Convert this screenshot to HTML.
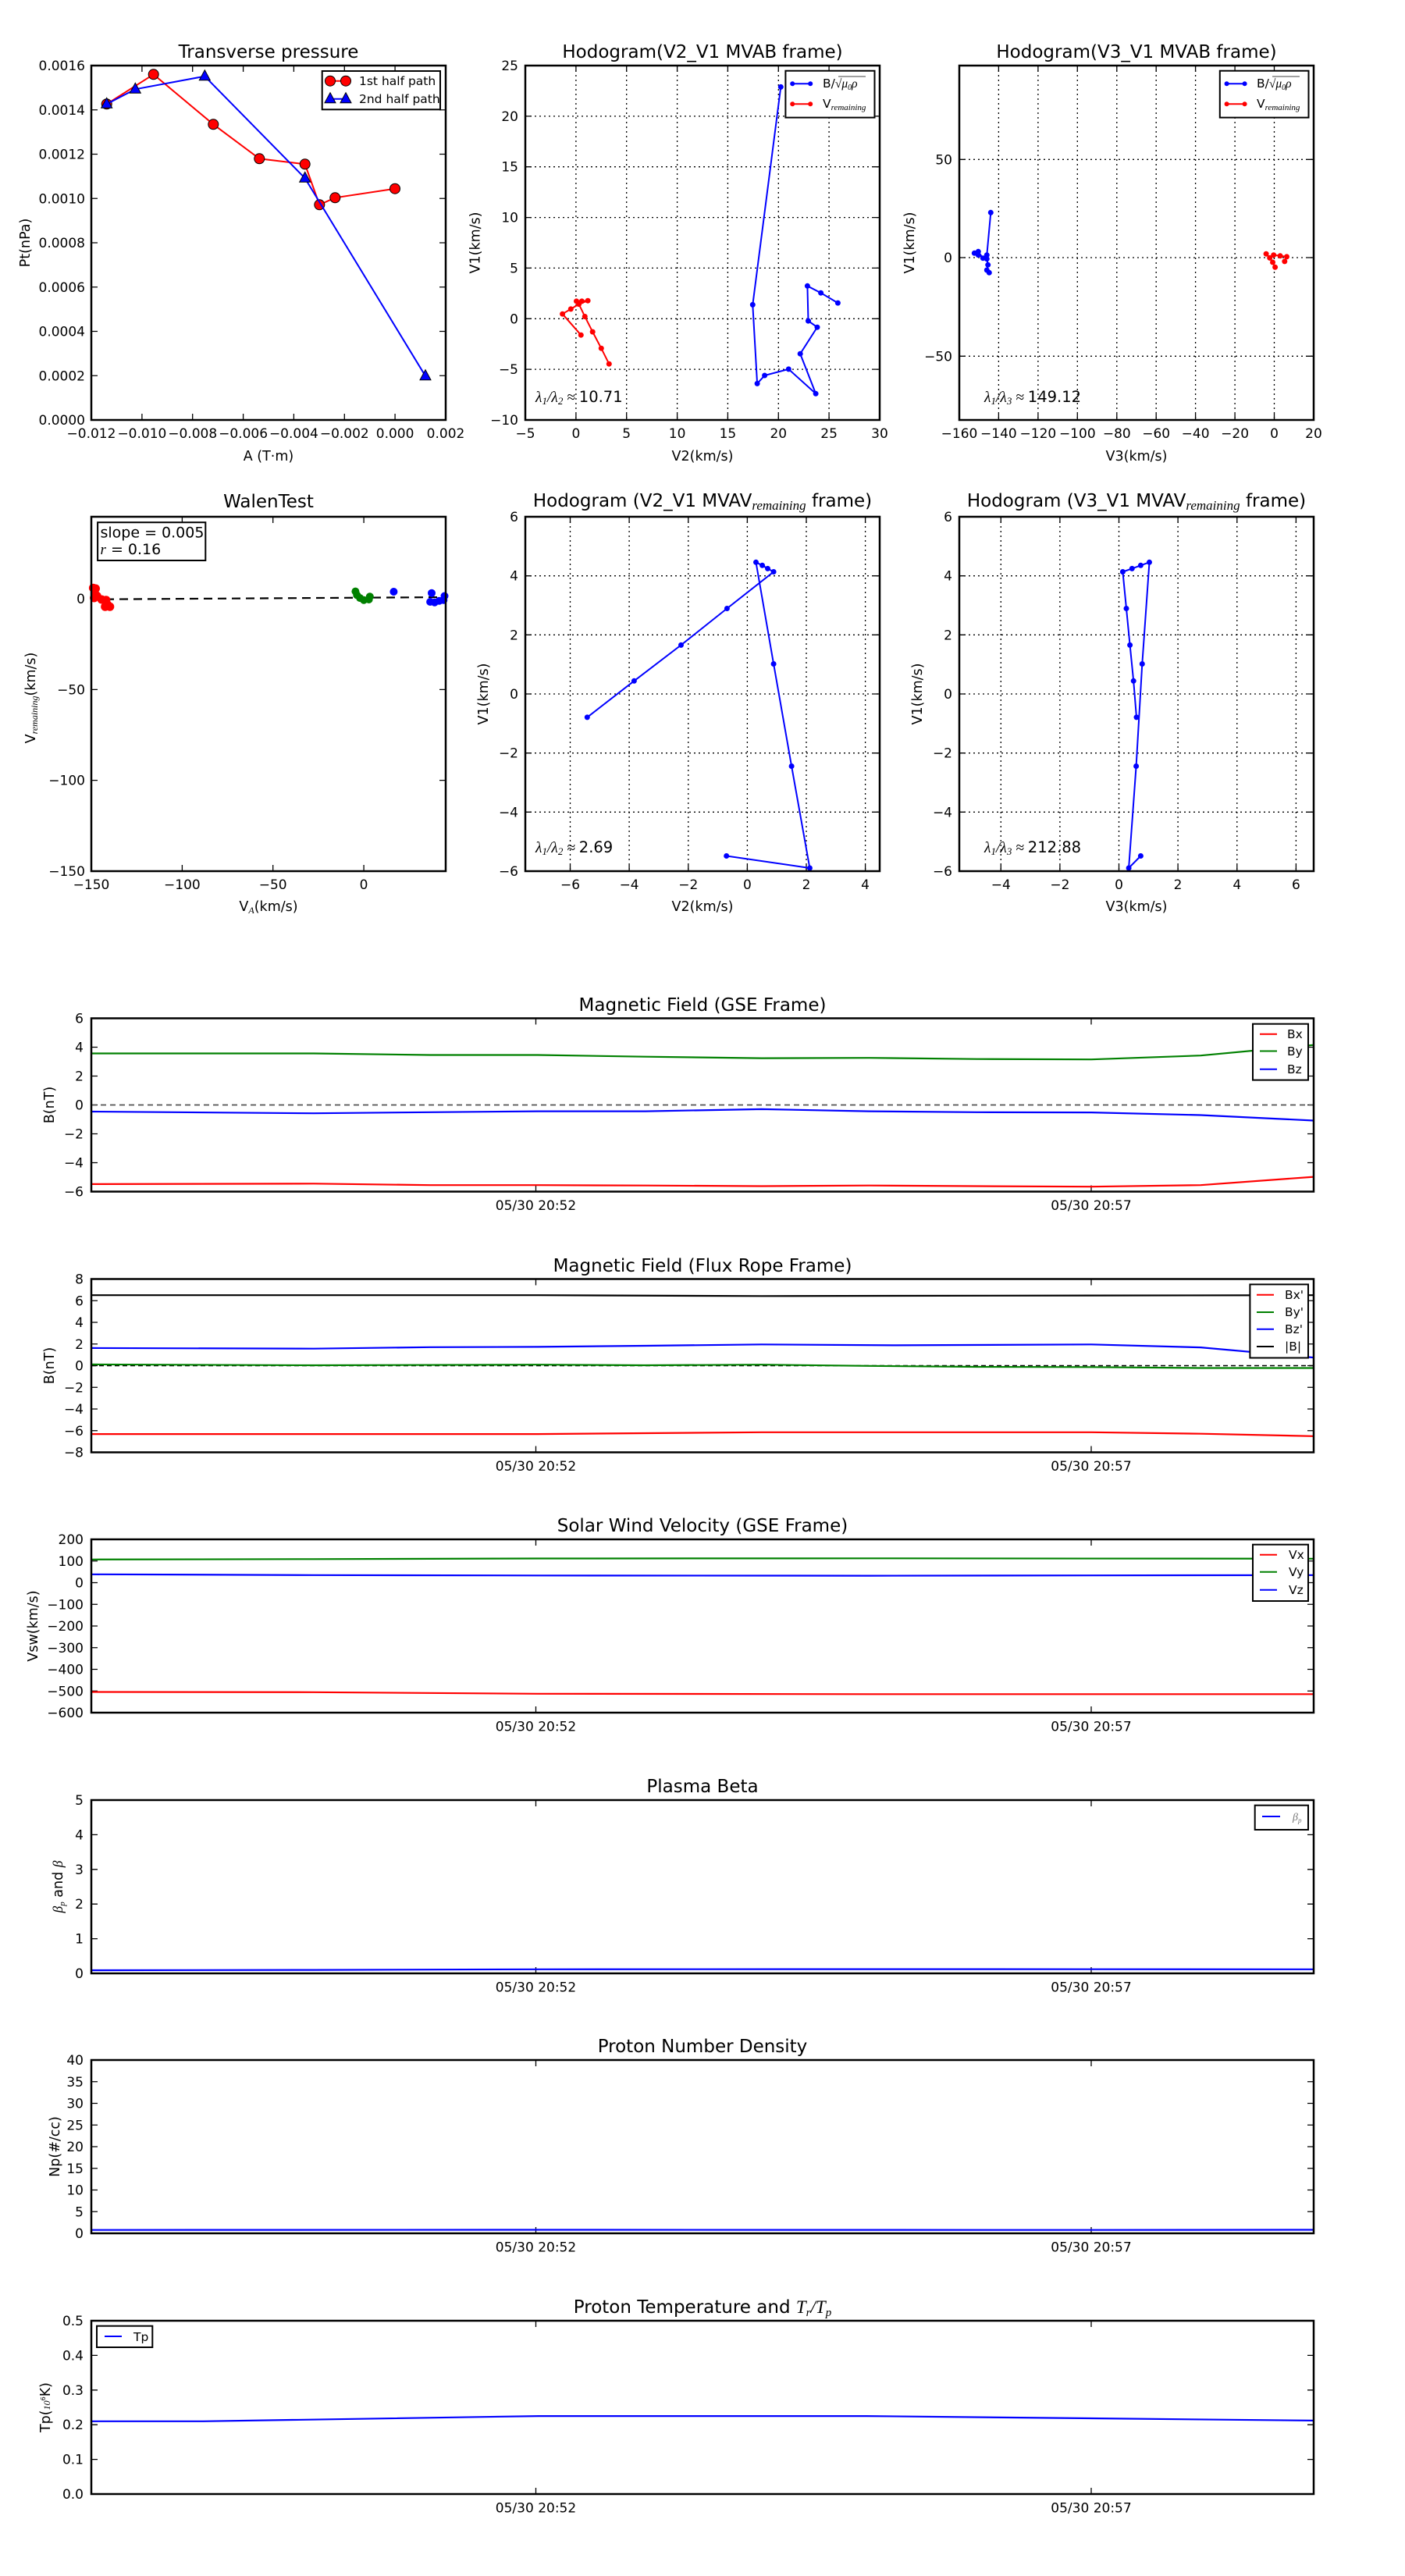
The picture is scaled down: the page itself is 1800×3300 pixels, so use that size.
<!DOCTYPE html>
<html><head><meta charset="utf-8"><style>
html,body{margin:0;padding:0;background:#fff;}
svg{display:block;font-family:"DejaVu Sans","Liberation Sans",sans-serif;}
.t{font-size:17px;fill:#000;}
.ti{font-size:23px;fill:#000;text-anchor:middle;}
.al{font-size:17.5px;fill:#000;text-anchor:middle;}
.lg{font-size:15.5px;fill:#000;}
.lam{font-size:19.5px;fill:#000;}
.m{font-family:"Liberation Serif","DejaVu Serif",serif;font-style:italic;}
.ax{fill:none;stroke:#000;stroke-width:2.5;}
.tk{fill:none;stroke:#000;stroke-width:1.3;}
.gr{fill:none;stroke:#000;stroke-width:1.3;stroke-dasharray:2 4;}
.r{text-anchor:end;}
.c{text-anchor:middle;}
</style></head><body>
<svg width="1800" height="3300" viewBox="0 0 1800 3300" xmlns="http://www.w3.org/2000/svg">
<rect width="1800" height="3300" fill="#fff"/>

<!-- ============ P1 Transverse pressure ============ -->
<text class="ti" x="344" y="74">Transverse pressure</text>
<path class="tk" d="M181.9 538v-8M246.7 538v-8M311.6 538v-8M376.4 538v-8M441.3 538v-8M506.1 538v-8M181.9 84v8M246.7 84v8M311.6 84v8M376.4 84v8M441.3 84v8M506.1 84v8M117 481.25h8M117 424.5h8M117 367.75h8M117 311h8M117 254.25h8M117 197.5h8M117 140.75h8M571 481.25h-8M571 424.5h-8M571 367.75h-8M571 311h-8M571 254.25h-8M571 197.5h-8M571 140.75h-8"/>
<polyline fill="none" stroke="#f00" stroke-width="2" points="136.7,133.3 196.7,95.3 273.3,159.3 332.3,203.3 390.7,210.3 409.3,262.3 429.3,253.3 506,241.7"/>
<g fill="#f00" stroke="#000" stroke-width="1"><circle cx="136.7" cy="133.3" r="6.5"/><circle cx="196.7" cy="95.3" r="6.5"/><circle cx="273.3" cy="159.3" r="6.5"/><circle cx="332.3" cy="203.3" r="6.5"/><circle cx="390.7" cy="210.3" r="6.5"/><circle cx="409.3" cy="262.3" r="6.5"/><circle cx="429.3" cy="253.3" r="6.5"/><circle cx="506" cy="241.7" r="6.5"/></g>
<polyline fill="none" stroke="#00f" stroke-width="2" points="136.7,133.3 173.3,114.3 262.3,97.7 390.7,228.3 545,481.7"/>
<g fill="#00f" stroke="#000" stroke-width="1"><polygon points="136.7,125.3 129.7,138.3 143.7,138.3"/><polygon points="173.3,106.3 166.3,119.3 180.3,119.3"/><polygon points="262.3,89.7 255.3,102.7 269.3,102.7"/><polygon points="390.7,220.3 383.7,233.3 397.7,233.3"/><polygon points="545,473.7 538,486.7 552,486.7"/></g>
<rect x="412.7" y="91" width="151.3" height="49.3" fill="#fff" stroke="#000" stroke-width="2"/>
<line x1="423" y1="103.7" x2="443" y2="103.7" stroke="#f00" stroke-width="2"/>
<circle cx="423" cy="103.7" r="6.5" fill="#f00" stroke="#000"/><circle cx="443" cy="103.7" r="6.5" fill="#f00" stroke="#000"/>
<text class="lg" x="460" y="109">1st half path</text>
<line x1="423" y1="126.7" x2="443" y2="126.7" stroke="#00f" stroke-width="2"/>
<polygon points="423,118.7 416,131.7 430,131.7" fill="#00f" stroke="#000"/><polygon points="443,118.7 436,131.7 450,131.7" fill="#00f" stroke="#000"/>
<text class="lg" x="460" y="132">2nd half path</text>
<rect class="ax" x="117" y="84" width="454" height="454"/>
<g class="t c"><text x="117" y="561">−0.012</text><text x="181.9" y="561">−0.010</text><text x="246.7" y="561">−0.008</text><text x="311.6" y="561">−0.006</text><text x="376.4" y="561">−0.004</text><text x="441.3" y="561">−0.002</text><text x="506.1" y="561">0.000</text><text x="571" y="561">0.002</text></g>
<g class="t r"><text x="109" y="544">0.0000</text><text x="109" y="487.25">0.0002</text><text x="109" y="430.5">0.0004</text><text x="109" y="373.75">0.0006</text><text x="109" y="317">0.0008</text><text x="109" y="260.25">0.0010</text><text x="109" y="203.5">0.0012</text><text x="109" y="146.75">0.0014</text><text x="109" y="90">0.0016</text></g>
<text class="al" x="344" y="590">A (T·m)</text>
<text class="al" transform="translate(38,311) rotate(-90)">Pt(nPa)</text>

<!-- ============ P2 Hodogram V2_V1 MVAB ============ -->
<text class="ti" x="900" y="74">Hodogram(V2_V1 MVAB frame)</text>
<path class="gr" d="M737.9 84V538M802.7 84V538M867.6 84V538M932.4 84V538M997.3 84V538M1062.1 84V538M673 148.9H1127M673 213.7H1127M673 278.6H1127M673 343.4H1127M673 408.3H1127M673 473.1H1127"/>
<path class="tk" d="M737.9 538v-8M802.7 538v-8M867.6 538v-8M932.4 538v-8M997.3 538v-8M1062.1 538v-8M737.9 84v8M802.7 84v8M867.6 84v8M932.4 84v8M997.3 84v8M1062.1 84v8M673 148.9h8M673 213.7h8M673 278.6h8M673 343.4h8M673 408.3h8M673 473.1h8M1127 148.9h-8M1127 213.7h-8M1127 278.6h-8M1127 343.4h-8M1127 408.3h-8M1127 473.1h-8"/>
<polyline fill="none" stroke="#00f" stroke-width="2" points="1000.3,111.4 964.3,390.4 970.1,491.4 979.6,481 1010.3,472.9 1045.1,504.3 1025.2,453.2 1047,419.2 1035.5,411.1 1034.4,366.3 1051.6,375.2 1073.4,388.1"/>
<g fill="#00f"><circle cx="1000.3" cy="111.4" r="3.5"/><circle cx="964.3" cy="390.4" r="3.5"/><circle cx="970.1" cy="491.4" r="3.5"/><circle cx="979.6" cy="481" r="3.5"/><circle cx="1010.3" cy="472.9" r="3.5"/><circle cx="1045.1" cy="504.3" r="3.5"/><circle cx="1025.2" cy="453.2" r="3.5"/><circle cx="1047" cy="419.2" r="3.5"/><circle cx="1035.5" cy="411.1" r="3.5"/><circle cx="1034.4" cy="366.3" r="3.5"/><circle cx="1051.6" cy="375.2" r="3.5"/><circle cx="1073.4" cy="388.1" r="3.5"/></g>
<polyline fill="none" stroke="#f00" stroke-width="2" points="744.3,429.2 720.6,402.2 731.3,395.9 741.6,389.6 738.5,385.9 745.4,385.9 753.1,385.2 741.6,389.6 749.3,405.5 759.2,425.1 770.3,446.2 780.3,466.2"/>
<g fill="#f00"><circle cx="744.3" cy="429.2" r="3.5"/><circle cx="720.6" cy="402.2" r="3.5"/><circle cx="731.3" cy="395.9" r="3.5"/><circle cx="741.6" cy="389.6" r="3.5"/><circle cx="738.5" cy="385.9" r="3.5"/><circle cx="745.4" cy="385.9" r="3.5"/><circle cx="753.1" cy="385.2" r="3.5"/><circle cx="749.3" cy="405.5" r="3.5"/><circle cx="759.2" cy="425.1" r="3.5"/><circle cx="770.3" cy="446.2" r="3.5"/><circle cx="780.3" cy="466.2" r="3.5"/></g>
<rect x="1006.4" y="90.7" width="114.1" height="59.9" fill="#fff" stroke="#000" stroke-width="2"/>
<line x1="1015.2" y1="107.3" x2="1038.2" y2="107.3" stroke="#00f" stroke-width="2"/><circle cx="1015.2" cy="107.3" r="3" fill="#00f"/><circle cx="1038.2" cy="107.3" r="3" fill="#00f"/>
<text class="lg" x="1054" y="112">B/<tspan class="m">√μ<tspan font-size="10" dy="3">0</tspan><tspan dy="-3">ρ</tspan></tspan></text>
<line x1="1074" y1="98" x2="1109" y2="98" stroke="#000" stroke-width="0.8"/>
<line x1="1015.2" y1="133.2" x2="1038.2" y2="133.2" stroke="#f00" stroke-width="2"/><circle cx="1015.2" cy="133.2" r="3" fill="#f00"/><circle cx="1038.2" cy="133.2" r="3" fill="#f00"/>
<text class="lg" x="1054" y="138">V<tspan class="m" font-size="11" dy="3">remaining</tspan></text>
<text class="lam" x="686" y="515"><tspan class="m">λ<tspan font-size="13" dy="3">1</tspan><tspan dy="-3">/λ</tspan><tspan font-size="13" dy="3">2</tspan><tspan dy="-3"> ≈ </tspan></tspan>10.71</text>
<rect class="ax" x="673" y="84" width="454" height="454"/>
<g class="t c"><text x="673" y="561">−5</text><text x="737.9" y="561">0</text><text x="802.7" y="561">5</text><text x="867.6" y="561">10</text><text x="932.4" y="561">15</text><text x="997.3" y="561">20</text><text x="1062.1" y="561">25</text><text x="1127" y="561">30</text></g>
<g class="t r"><text x="664" y="90">25</text><text x="664" y="154.9">20</text><text x="664" y="219.7">15</text><text x="664" y="284.6">10</text><text x="664" y="349.4">5</text><text x="664" y="414.3">0</text><text x="664" y="479.1">−5</text><text x="664" y="544">−10</text></g>
<text class="al" x="900" y="590">V2(km/s)</text>
<text class="al" transform="translate(614.5,311) rotate(-90)">V1(km/s)</text>

<!-- ============ P3 Hodogram V3_V1 MVAB ============ -->
<text class="ti" x="1456" y="74">Hodogram(V3_V1 MVAB frame)</text>
<path class="gr" d="M1279.4 84V538M1329.9 84V538M1380.3 84V538M1430.8 84V538M1481.2 84V538M1531.6 84V538M1582.1 84V538M1632.5 84V538M1229 204.3H1683M1229 330H1683M1229 456.3H1683"/>
<path class="tk" d="M1279.4 538v-8M1329.9 538v-8M1380.3 538v-8M1430.8 538v-8M1481.2 538v-8M1531.6 538v-8M1582.1 538v-8M1632.5 538v-8M1279.4 84v8M1329.9 84v8M1380.3 84v8M1430.8 84v8M1481.2 84v8M1531.6 84v8M1582.1 84v8M1632.5 84v8M1229 204.3h8M1229 330h8M1229 456.3h8M1683 204.3h-8M1683 330h-8M1683 456.3h-8"/>
<polyline fill="none" stroke="#00f" stroke-width="2" points="1269.3,272.3 1264.3,326.7 1264.3,331.7 1259.3,330.7 1253.3,322.3 1248.3,324.3 1253.3,326.7 1264.3,331.7 1265.7,339.3 1264.3,346 1267.3,349.3"/>
<g fill="#00f"><circle cx="1269.3" cy="272.3" r="3.5"/><circle cx="1264.3" cy="326.7" r="3.5"/><circle cx="1264.3" cy="331.7" r="3.5"/><circle cx="1259.3" cy="330.7" r="3.5"/><circle cx="1253.3" cy="322.3" r="3.5"/><circle cx="1248.3" cy="324.3" r="3.5"/><circle cx="1253.3" cy="326.7" r="3.5"/><circle cx="1265.7" cy="339.3" r="3.5"/><circle cx="1264.3" cy="346" r="3.5"/><circle cx="1267.3" cy="349.3" r="3.5"/></g>
<polyline fill="none" stroke="#f00" stroke-width="2" points="1622.1,325.2 1626.7,330.4 1630.5,336 1633.6,342.3"/>
<polyline fill="none" stroke="#f00" stroke-width="2" points="1626.7,330.4 1631.7,326.7 1640.1,327.8 1648.5,328.9 1645.8,334.9"/>
<g fill="#f00"><circle cx="1622.1" cy="325.2" r="3.5"/><circle cx="1626.7" cy="330.4" r="3.5"/><circle cx="1630.5" cy="336" r="3.5"/><circle cx="1633.6" cy="342.3" r="3.5"/><circle cx="1631.7" cy="326.7" r="3.5"/><circle cx="1640.1" cy="327.8" r="3.5"/><circle cx="1645.8" cy="334.9" r="3.5"/><circle cx="1648.5" cy="328.9" r="3.5"/></g>
<rect x="1562.8" y="90.7" width="113.7" height="59.9" fill="#fff" stroke="#000" stroke-width="2"/>
<line x1="1571.6" y1="107.3" x2="1594.6" y2="107.3" stroke="#00f" stroke-width="2"/><circle cx="1571.6" cy="107.3" r="3" fill="#00f"/><circle cx="1594.6" cy="107.3" r="3" fill="#00f"/>
<text class="lg" x="1610" y="112">B/<tspan class="m">√μ<tspan font-size="10" dy="3">0</tspan><tspan dy="-3">ρ</tspan></tspan></text>
<line x1="1630" y1="98" x2="1665" y2="98" stroke="#000" stroke-width="0.8"/>
<line x1="1571.6" y1="133.2" x2="1594.6" y2="133.2" stroke="#f00" stroke-width="2"/><circle cx="1571.6" cy="133.2" r="3" fill="#f00"/><circle cx="1594.6" cy="133.2" r="3" fill="#f00"/>
<text class="lg" x="1610" y="138">V<tspan class="m" font-size="11" dy="3">remaining</tspan></text>
<text class="lam" x="1261" y="515"><tspan class="m">λ<tspan font-size="13" dy="3">1</tspan><tspan dy="-3">/λ</tspan><tspan font-size="13" dy="3">3</tspan><tspan dy="-3"> ≈ </tspan></tspan>149.12</text>
<rect class="ax" x="1229" y="84" width="454" height="454"/>
<g class="t c"><text x="1229" y="561">−160</text><text x="1279.4" y="561">−140</text><text x="1329.9" y="561">−120</text><text x="1380.3" y="561">−100</text><text x="1430.8" y="561">−80</text><text x="1481.2" y="561">−60</text><text x="1531.6" y="561">−40</text><text x="1582.1" y="561">−20</text><text x="1632.5" y="561">0</text><text x="1683" y="561">20</text></g>
<g class="t r"><text x="1220" y="210.3">50</text><text x="1220" y="336">0</text><text x="1220" y="462.3">−50</text></g>
<text class="al" x="1456" y="590">V3(km/s)</text>
<text class="al" transform="translate(1171,311) rotate(-90)">V1(km/s)</text>

<!-- ============ P4 WalenTest ============ -->
<text class="ti" x="344" y="650">WalenTest</text>
<path class="tk" d="M233.4 1116v-8M349.7 1116v-8M466.1 1116v-8M233.4 662v8M349.7 662v8M466.1 662v8M117 767.2h8M117 883.4h8M117 999.6h8M571 767.2h-8M571 883.4h-8M571 999.6h-8"/>
<line x1="117" y1="767.8" x2="571" y2="765" stroke="#000" stroke-width="2.2" stroke-dasharray="11 7"/>
<g fill="#f00"><circle cx="119.4" cy="753.2" r="5.5"/><circle cx="122.5" cy="754" r="5.5"/><circle cx="121.7" cy="760.6" r="5.5"/><circle cx="124.4" cy="763.5" r="5.5"/><circle cx="120.6" cy="766" r="5.5"/><circle cx="130.1" cy="768" r="5.5"/><circle cx="135.9" cy="768.7" r="5.5"/><circle cx="137.8" cy="774.6" r="5.5"/><circle cx="140.8" cy="777.2" r="5.5"/><circle cx="134.7" cy="777.2" r="5.5"/></g>
<g fill="#008000"><circle cx="455.4" cy="757.6" r="5"/><circle cx="457.3" cy="762.4" r="5"/><circle cx="461.2" cy="766.1" r="5"/><circle cx="466.1" cy="768.7" r="5"/><circle cx="473.8" cy="764.3" r="5"/><circle cx="472.6" cy="768" r="5"/></g>
<g fill="#00f"><circle cx="504.4" cy="758" r="5"/><circle cx="553" cy="759.8" r="5"/><circle cx="551.1" cy="771" r="5"/><circle cx="556.8" cy="771.7" r="5"/><circle cx="562.6" cy="769.8" r="5"/><circle cx="569.5" cy="763.5" r="5"/><circle cx="568.3" cy="768.7" r="5"/></g>
<rect x="125.1" y="669.2" width="138.2" height="48.8" fill="#fff" stroke="#000" stroke-width="2"/>
<text x="128.5" y="688.5" font-size="19">slope = 0.005</text>
<text x="128.5" y="710" font-size="19"><tspan class="m">r</tspan> = 0.16</text>
<rect class="ax" x="117" y="662" width="454" height="454"/>
<g class="t c"><text x="117" y="1139">−150</text><text x="233.4" y="1139">−100</text><text x="349.7" y="1139">−50</text><text x="466.1" y="1139">0</text></g>
<g class="t r"><text x="109" y="773.2">0</text><text x="109" y="889.4">−50</text><text x="109" y="1005.6">−100</text><text x="109" y="1122">−150</text></g>
<text class="al" x="344" y="1167">V<tspan class="m" font-size="12" dy="3">A</tspan><tspan dy="-3">(km/s)</tspan></text>
<text class="al" transform="translate(45,894) rotate(-90)">V<tspan class="m" font-size="12" dy="3">remaining</tspan><tspan dy="-3">(km/s)</tspan></text>

<!-- ============ P5 Hodogram V2_V1 MVAV ============ -->
<text class="ti" x="900" y="649">Hodogram (V2_V1 MVAV<tspan class="m" font-size="17" dy="4">remaining</tspan><tspan dy="-4"> frame)</tspan></text>
<path class="gr" d="M730.5 662V1116M806.1 662V1116M881.8 662V1116M957.4 662V1116M1033 662V1116M1108.6 662V1116M673 737.7H1127M673 813.3H1127M673 889H1127M673 964.7H1127M673 1040.3H1127"/>
<path class="tk" d="M730.5 1116v-8M806.1 1116v-8M881.8 1116v-8M957.4 1116v-8M1033 1116v-8M1108.6 1116v-8M730.5 662v8M806.1 662v8M881.8 662v8M957.4 662v8M1033 662v8M1108.6 662v8M673 737.7h8M673 813.3h8M673 889h8M673 964.7h8M673 1040.3h8M1127 737.7h-8M1127 813.3h-8M1127 889h-8M1127 964.7h-8M1127 1040.3h-8"/>
<polyline fill="none" stroke="#00f" stroke-width="2" points="930.7,1096.5 1037.4,1112 1014.1,981.5 991.1,850.5 968.5,720.3 976.6,724.3 983.5,728.4 991.1,732.5 931.4,779.5 872.5,826.4 812.4,872.3 752.3,918.9"/>
<g fill="#00f"><circle cx="930.7" cy="1096.5" r="3.5"/><circle cx="1037.4" cy="1112" r="3.5"/><circle cx="1014.1" cy="981.5" r="3.5"/><circle cx="991.1" cy="850.5" r="3.5"/><circle cx="968.5" cy="720.3" r="3.5"/><circle cx="976.6" cy="724.3" r="3.5"/><circle cx="983.5" cy="728.4" r="3.5"/><circle cx="991.1" cy="732.5" r="3.5"/><circle cx="931.4" cy="779.5" r="3.5"/><circle cx="872.5" cy="826.4" r="3.5"/><circle cx="812.4" cy="872.3" r="3.5"/><circle cx="752.3" cy="918.9" r="3.5"/></g>
<text class="lam" x="686" y="1092"><tspan class="m">λ<tspan font-size="13" dy="3">1</tspan><tspan dy="-3">/λ</tspan><tspan font-size="13" dy="3">2</tspan><tspan dy="-3"> ≈ </tspan></tspan>2.69</text>
<rect class="ax" x="673" y="662" width="454" height="454"/>
<g class="t c"><text x="730.5" y="1139">−6</text><text x="806.1" y="1139">−4</text><text x="881.8" y="1139">−2</text><text x="957.4" y="1139">0</text><text x="1033" y="1139">2</text><text x="1108.6" y="1139">4</text></g>
<g class="t r"><text x="664" y="668">6</text><text x="664" y="743.7">4</text><text x="664" y="819.3">2</text><text x="664" y="895">0</text><text x="664" y="970.7">−2</text><text x="664" y="1046.3">−4</text><text x="664" y="1122">−6</text></g>
<text class="al" x="900" y="1167">V2(km/s)</text>
<text class="al" transform="translate(625,889) rotate(-90)">V1(km/s)</text>

<!-- ============ P6 Hodogram V3_V1 MVAV ============ -->
<text class="ti" x="1456" y="649">Hodogram (V3_V1 MVAV<tspan class="m" font-size="17" dy="4">remaining</tspan><tspan dy="-4"> frame)</tspan></text>
<path class="gr" d="M1282.3 662V1116M1357.9 662V1116M1433.5 662V1116M1509.1 662V1116M1584.8 662V1116M1660.4 662V1116M1229 737.7H1683M1229 813.3H1683M1229 889H1683M1229 964.7H1683M1229 1040.3H1683"/>
<path class="tk" d="M1282.3 1116v-8M1357.9 1116v-8M1433.5 1116v-8M1509.1 1116v-8M1584.8 1116v-8M1660.4 1116v-8M1282.3 662v8M1357.9 662v8M1433.5 662v8M1509.1 662v8M1584.8 662v8M1660.4 662v8M1229 737.7h8M1229 813.3h8M1229 889h8M1229 964.7h8M1229 1040.3h8M1683 737.7h-8M1683 813.3h-8M1683 889h-8M1683 964.7h-8M1683 1040.3h-8"/>
<polyline fill="none" stroke="#00f" stroke-width="2" points="1461.4,1096.5 1446.1,1112 1455.6,981.5 1463.3,850.5 1472.5,720.3 1461.4,724.3 1450.3,728.4 1438.4,732.5 1443,779.5 1447.6,826.4 1452.2,872.3 1456,918.9"/>
<g fill="#00f"><circle cx="1461.4" cy="1096.5" r="3.5"/><circle cx="1446.1" cy="1112" r="3.5"/><circle cx="1455.6" cy="981.5" r="3.5"/><circle cx="1463.3" cy="850.5" r="3.5"/><circle cx="1472.5" cy="720.3" r="3.5"/><circle cx="1461.4" cy="724.3" r="3.5"/><circle cx="1450.3" cy="728.4" r="3.5"/><circle cx="1438.4" cy="732.5" r="3.5"/><circle cx="1443" cy="779.5" r="3.5"/><circle cx="1447.6" cy="826.4" r="3.5"/><circle cx="1452.2" cy="872.3" r="3.5"/><circle cx="1456" cy="918.9" r="3.5"/></g>
<text class="lam" x="1261" y="1092"><tspan class="m">λ<tspan font-size="13" dy="3">1</tspan><tspan dy="-3">/λ</tspan><tspan font-size="13" dy="3">3</tspan><tspan dy="-3"> ≈ </tspan></tspan>212.88</text>
<rect class="ax" x="1229" y="662" width="454" height="454"/>
<g class="t c"><text x="1282.3" y="1139">−4</text><text x="1357.9" y="1139">−2</text><text x="1433.5" y="1139">0</text><text x="1509.1" y="1139">2</text><text x="1584.8" y="1139">4</text><text x="1660.4" y="1139">6</text></g>
<g class="t r"><text x="1220" y="668">6</text><text x="1220" y="743.7">4</text><text x="1220" y="819.3">2</text><text x="1220" y="895">0</text><text x="1220" y="970.7">−2</text><text x="1220" y="1046.3">−4</text><text x="1220" y="1122">−6</text></g>
<text class="al" x="1456" y="1167">V3(km/s)</text>
<text class="al" transform="translate(1181,889) rotate(-90)">V1(km/s)</text>

<!-- ============ TS1 Magnetic Field GSE ============ -->
<text class="ti" x="900" y="1295">Magnetic Field (GSE Frame)</text>
<path class="tk" d="M686.5 1304.5v8M1398 1304.5v8M686.5 1526.5v-8M1398 1526.5v-8M117 1341.5h8M117 1378.5h8M117 1415.5h8M117 1452.5h8M117 1489.5h8M1683 1341.5h-8M1683 1378.5h-8M1683 1415.5h-8M1683 1452.5h-8M1683 1489.5h-8"/>
<line x1="117" y1="1415.5" x2="1683" y2="1415.5" stroke="#555" stroke-width="1.8" stroke-dasharray="7 5"/>
<polyline fill="none" stroke="#008000" stroke-width="2.2" points="117,1349.5 401.8,1349.5 551,1351.5 688.8,1351.5 826.5,1353.7 975.8,1355.6 1113.5,1355.2 1251.3,1356.7 1398.2,1357.2 1538.3,1352.2 1683,1338.7"/>
<polyline fill="none" stroke="#00f" stroke-width="2.2" points="117,1424 401.8,1426.2 551,1424.8 688.8,1423.6 826.5,1423.6 975.8,1420.9 1113.5,1423.6 1251.3,1424.8 1398.2,1425.1 1538.3,1428.5 1683,1435.5"/>
<polyline fill="none" stroke="#f00" stroke-width="2.2" points="117,1516.9 401.8,1516.3 551,1518.2 688.8,1518.2 826.5,1518.7 975.8,1519.5 1113.5,1518.7 1251.3,1519.5 1398.2,1520.2 1538.3,1518.2 1683,1507.6"/>
<rect x="1605" y="1311.7" width="71" height="71.9" fill="#fff" stroke="#000" stroke-width="2"/>
<line x1="1614" y1="1324.7" x2="1636" y2="1324.7" stroke="#f00" stroke-width="2"/><text class="lg" x="1649" y="1330">Bx</text>
<line x1="1614" y1="1346.5" x2="1636" y2="1346.5" stroke="#008000" stroke-width="2"/><text class="lg" x="1649" y="1352">By</text>
<line x1="1614" y1="1369.8" x2="1636" y2="1369.8" stroke="#00f" stroke-width="2"/><text class="lg" x="1649" y="1375">Bz</text>
<rect class="ax" x="117" y="1304.5" width="1566" height="222"/>
<g class="t r"><text x="107" y="1310.5">6</text><text x="107" y="1347.5">4</text><text x="107" y="1384.5">2</text><text x="107" y="1421.5">0</text><text x="107" y="1458.5">−2</text><text x="107" y="1495.5">−4</text><text x="107" y="1532.5">−6</text></g>
<g class="t c"><text x="686.5" y="1550">05/30 20:52</text><text x="1398" y="1550">05/30 20:57</text></g>
<text class="al" transform="translate(69,1415.5) rotate(-90)">B(nT)</text>

<!-- ============ TS2 Magnetic Field Flux Rope ============ -->
<text class="ti" x="900" y="1629">Magnetic Field (Flux Rope Frame)</text>
<path class="tk" d="M686.5 1638.5v8M1398 1638.5v8M686.5 1860.5v-8M1398 1860.5v-8M117 1666.25h8M117 1694h8M117 1721.75h8M117 1749.5h8M117 1777.25h8M117 1805h8M117 1832.75h8M1683 1666.25h-8M1683 1694h-8M1683 1721.75h-8M1683 1749.5h-8M1683 1777.25h-8M1683 1805h-8M1683 1832.75h-8"/>
<line x1="117" y1="1749.5" x2="1683" y2="1749.5" stroke="#000" stroke-width="1.5" stroke-dasharray="6 4"/>
<polyline fill="none" stroke="#000" stroke-width="2.2" points="117,1659.2 688.8,1659.2 975.8,1660.3 1398.2,1659.6 1683,1659.2"/>
<polyline fill="none" stroke="#00f" stroke-width="2.2" points="117,1726.9 401.8,1727.7 551,1725.8 688.8,1725.4 826.5,1724 975.8,1722.3 1148,1723.4 1398.2,1722.3 1538.3,1726.1 1683,1739.1"/>
<polyline fill="none" stroke="#008000" stroke-width="2.2" points="117,1747.9 401.8,1749 688.8,1748.2 826.5,1749 975.8,1748.2 1113.5,1749.8 1251.3,1751 1398.2,1751.3 1538.3,1752.5 1683,1752.5"/>
<polyline fill="none" stroke="#f00" stroke-width="2.2" points="117,1837.1 401.8,1837.1 688.8,1837.1 975.8,1834.8 1398.2,1834.8 1538.3,1836.7 1683,1839.8"/>
<rect x="1601.4" y="1645.4" width="74.6" height="94.1" fill="#fff" stroke="#000" stroke-width="2"/>
<line x1="1610" y1="1658.8" x2="1632" y2="1658.8" stroke="#f00" stroke-width="2"/><text class="lg" x="1646" y="1664">Bx'</text>
<line x1="1610" y1="1681" x2="1632" y2="1681" stroke="#008000" stroke-width="2"/><text class="lg" x="1646" y="1686">By'</text>
<line x1="1610" y1="1702.8" x2="1632" y2="1702.8" stroke="#00f" stroke-width="2"/><text class="lg" x="1646" y="1708">Bz'</text>
<line x1="1610" y1="1725" x2="1632" y2="1725" stroke="#000" stroke-width="2"/><text class="lg" x="1646" y="1730">|B|</text>
<rect class="ax" x="117" y="1638.5" width="1566" height="222"/>
<g class="t r"><text x="107" y="1644.5">8</text><text x="107" y="1672.25">6</text><text x="107" y="1700">4</text><text x="107" y="1727.75">2</text><text x="107" y="1755.5">0</text><text x="107" y="1783.25">−2</text><text x="107" y="1811">−4</text><text x="107" y="1838.75">−6</text><text x="107" y="1866.5">−8</text></g>
<g class="t c"><text x="686.5" y="1884">05/30 20:52</text><text x="1398" y="1884">05/30 20:57</text></g>
<text class="al" transform="translate(69,1749.5) rotate(-90)">B(nT)</text>

<!-- ============ TS3 Solar Wind Velocity ============ -->
<text class="ti" x="900" y="1962">Solar Wind Velocity (GSE Frame)</text>
<path class="tk" d="M686.5 1972v8M1398 1972v8M686.5 2194v-8M1398 2194v-8M117 1999.75h8M117 2027.5h8M117 2055.25h8M117 2083h8M117 2110.75h8M117 2138.5h8M117 2166.25h8M1683 1999.75h-8M1683 2027.5h-8M1683 2055.25h-8M1683 2083h-8M1683 2110.75h-8M1683 2138.5h-8M1683 2166.25h-8"/>
<polyline fill="none" stroke="#008000" stroke-width="2.2" points="117,1997.8 401.8,1997.3 688.8,1996.5 1113.5,1996.3 1683,1996.8"/>
<polyline fill="none" stroke="#00f" stroke-width="2.2" points="117,2016.8 401.8,2017.8 688.8,2018.3 1113.5,2018.6 1683,2017.8"/>
<polyline fill="none" stroke="#f00" stroke-width="2.2" points="117,2167.5 401.8,2167.8 688.8,2169.8 1113.5,2170.3 1683,2170.3"/>
<rect x="1605" y="1978.7" width="71" height="72.3" fill="#fff" stroke="#000" stroke-width="2"/>
<line x1="1614" y1="1991.7" x2="1636" y2="1991.7" stroke="#f00" stroke-width="2"/><text class="lg" x="1651" y="1997">Vx</text>
<line x1="1614" y1="2013.7" x2="1636" y2="2013.7" stroke="#008000" stroke-width="2"/><text class="lg" x="1651" y="2019">Vy</text>
<line x1="1614" y1="2036.7" x2="1636" y2="2036.7" stroke="#00f" stroke-width="2"/><text class="lg" x="1651" y="2042">Vz</text>
<rect class="ax" x="117" y="1972" width="1566" height="222"/>
<g class="t r"><text x="107" y="1978">200</text><text x="107" y="2005.75">100</text><text x="107" y="2033.5">0</text><text x="107" y="2061.25">−100</text><text x="107" y="2089">−200</text><text x="107" y="2116.75">−300</text><text x="107" y="2144.5">−400</text><text x="107" y="2172.25">−500</text><text x="107" y="2200">−600</text></g>
<g class="t c"><text x="686.5" y="2217.5">05/30 20:52</text><text x="1398" y="2217.5">05/30 20:57</text></g>
<text class="al" transform="translate(48,2083) rotate(-90)">Vsw(km/s)</text>

<!-- ============ TS4 Plasma Beta ============ -->
<text class="ti" x="900" y="2296">Plasma Beta</text>
<path class="tk" d="M686.5 2306v8M1398 2306v8M686.5 2528v-8M1398 2528v-8M117 2350.4h8M117 2394.8h8M117 2439.2h8M117 2483.6h8M1683 2350.4h-8M1683 2394.8h-8M1683 2439.2h-8M1683 2483.6h-8"/>
<polyline fill="none" stroke="#00f" stroke-width="2.2" points="117,2524 401.8,2523.6 688.8,2522.8 1113.5,2522.6 1683,2522.8"/>
<rect x="1607.7" y="2312.7" width="68.3" height="31.3" fill="#fff" stroke="#000" stroke-width="2"/>
<line x1="1617" y1="2327" x2="1640" y2="2327" stroke="#00f" stroke-width="2"/>
<text x="1656" y="2332" font-size="14" fill="#777" class="m">β<tspan font-size="9" dy="3">p</tspan></text>
<rect class="ax" x="117" y="2306" width="1566" height="222"/>
<g class="t r"><text x="107" y="2312">5</text><text x="107" y="2356.4">4</text><text x="107" y="2400.8">3</text><text x="107" y="2445.2">2</text><text x="107" y="2489.6">1</text><text x="107" y="2534">0</text></g>
<g class="t c"><text x="686.5" y="2551.5">05/30 20:52</text><text x="1398" y="2551.5">05/30 20:57</text></g>
<text class="al" transform="translate(80,2417) rotate(-90)"><tspan class="m">β<tspan font-size="11" dy="3">p</tspan></tspan><tspan dy="-3"> and </tspan><tspan class="m">β</tspan></text>

<!-- ============ TS5 Proton Number Density ============ -->
<text class="ti" x="900" y="2629">Proton Number Density</text>
<path class="tk" d="M686.5 2639v8M1398 2639v8M686.5 2861v-8M1398 2861v-8M117 2666.75h8M117 2694.5h8M117 2722.25h8M117 2750h8M117 2777.75h8M117 2805.5h8M117 2833.25h8M1683 2666.75h-8M1683 2694.5h-8M1683 2722.25h-8M1683 2750h-8M1683 2777.75h-8M1683 2805.5h-8M1683 2833.25h-8"/>
<polyline fill="none" stroke="#00f" stroke-width="2.2" points="117,2856.7 688.8,2856.5 1398.2,2856.7 1683,2856.5"/>
<rect class="ax" x="117" y="2639" width="1566" height="222"/>
<g class="t r"><text x="107" y="2645">40</text><text x="107" y="2672.75">35</text><text x="107" y="2700.5">30</text><text x="107" y="2728.25">25</text><text x="107" y="2756">20</text><text x="107" y="2783.75">15</text><text x="107" y="2811.5">10</text><text x="107" y="2839.25">5</text><text x="107" y="2867">0</text></g>
<g class="t c"><text x="686.5" y="2884.5">05/30 20:52</text><text x="1398" y="2884.5">05/30 20:57</text></g>
<text class="al" transform="translate(76,2750) rotate(-90)">Np(#/cc)</text>

<!-- ============ TS6 Proton Temperature ============ -->
<text class="ti" x="900" y="2963">Proton Temperature and <tspan class="m">T<tspan font-size="15" dy="4">r</tspan><tspan dy="-4">/T</tspan><tspan font-size="15" dy="4">p</tspan></tspan></text>
<path class="tk" d="M686.5 2973v8M1398 2973v8M686.5 3195v-8M1398 3195v-8M117 3017.4h8M117 3061.8h8M117 3106.2h8M117 3150.6h8M1683 3017.4h-8M1683 3061.8h-8M1683 3106.2h-8M1683 3150.6h-8"/>
<polyline fill="none" stroke="#00f" stroke-width="2.2" points="117,3101.8 260,3101.8 690,3095.1 1110,3095.1 1683,3100.9"/>
<rect x="124" y="2979.7" width="71.3" height="27.3" fill="#fff" stroke="#000" stroke-width="2"/>
<line x1="134" y1="2993" x2="156" y2="2993" stroke="#00f" stroke-width="2"/>
<text class="lg" x="171" y="2999">Tp</text>
<rect class="ax" x="117" y="2973" width="1566" height="222"/>
<g class="t r"><text x="107" y="2979">0.5</text><text x="107" y="3023.4">0.4</text><text x="107" y="3067.8">0.3</text><text x="107" y="3112.2">0.2</text><text x="107" y="3156.6">0.1</text><text x="107" y="3201">0.0</text></g>
<g class="t c"><text x="686.5" y="3218.5">05/30 20:52</text><text x="1398" y="3218.5">05/30 20:57</text></g>
<text class="al" transform="translate(64,3084) rotate(-90)">Tp(<tspan font-size="12" class="m">10</tspan><tspan font-size="8" dy="-6">6</tspan><tspan dy="6">K)</tspan></text>

</svg>
</body></html>
